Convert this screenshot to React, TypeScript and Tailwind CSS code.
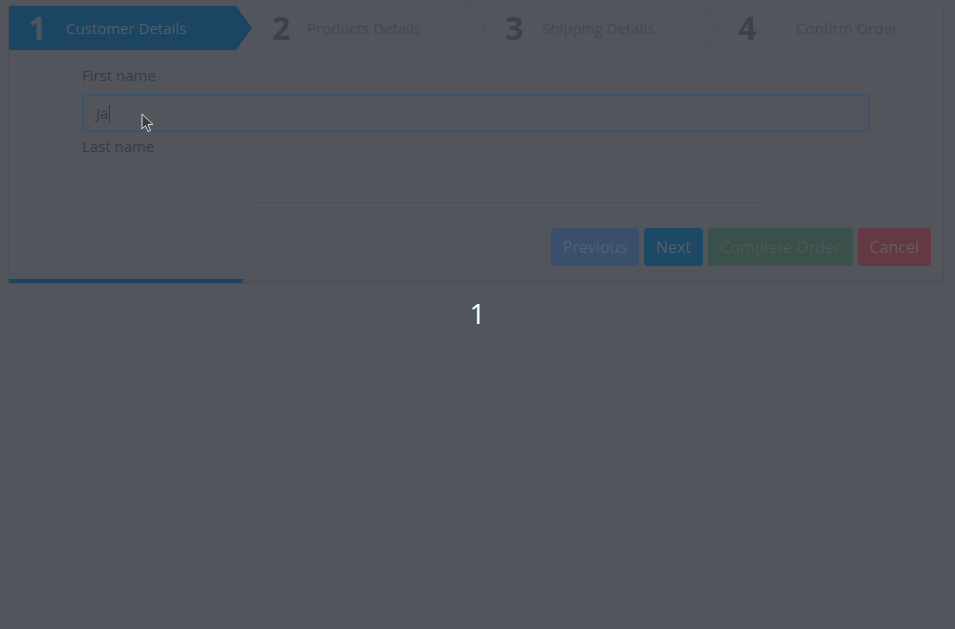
const steps = [
  { n: '1', label: 'Customer Details', numPad: 'pl-[19px]', textPad: 'pl-[19px]', width: 'w-[243px]' },
  { n: '2', label: 'Products Details', numPad: 'pl-[20px]', textPad: 'pl-[17px]', width: 'w-[235px]' },
  { n: '3', label: 'Shipping Details', numPad: 'pl-[18px]', textPad: 'pl-[17px]', width: 'w-[233px]' },
  { n: '4', label: 'Confirm Order', numPad: 'pl-[18px]', textPad: 'pl-[38px]', width: 'flex-1' },
]

const Chevron = () => (
  <svg className="absolute right-0 top-0 h-full w-[18px]" viewBox="0 0 18 44" fill="none">
    <path d="M1 0 L17 22 L1 44" stroke="#4d5057" strokeWidth="1" />
  </svg>
)

const Stepper = () => (
  <div className="flex h-[44px]">
    {steps.map((s, i) => {
      const active = i === 0
      return (
        <div key={s.n} className={`relative flex h-full items-center ${s.width}`}>
          {active && (
            <div className="absolute inset-0 bg-[#1c4563] [clip-path:polygon(0_0,227px_0,100%_50%,227px_100%,0_100%)]" />
          )}
          {!active && i < 3 && <Chevron />}
          <span
            className={`relative ${s.numPad} w-[57px] shrink-0 text-[32px] font-bold leading-none ${
              active ? 'text-[#4b555f]' : 'text-[#3e4148]'
            }`}
          >
            {s.n}
          </span>
          <span
            className={`relative ${s.textPad} -ml-[19px] text-[15px] ${
              active ? 'text-[#525e69]' : 'text-[#45484f]'
            }`}
          >
            {s.label}
          </span>
        </div>
      )
    })}
  </div>
)

const Cursor = () => (
  <svg className="absolute left-[141px] top-[113px] h-[20px] w-[13px]" viewBox="0 0 13 20">
    <path d="M1 1 L1 16 L4.5 12.5 L7 18.5 L9.5 17.5 L7 11.5 L12 11.5 Z" fill="#3a3d44" stroke="#d8d8d8" strokeWidth="1" />
  </svg>
)

export default function App() {
  return (
    <div className="relative min-h-screen bg-[#52555c] pt-[5px] font-['Open_Sans',sans-serif]">
      <div className="ml-[8px] w-[936px] border border-[#4d5057]">
        <Stepper />

        <div className="px-[73px] pt-[14px]">
          <label className="block h-[22px] text-[15px] leading-[22px] text-[#383b42]">First name</label>
          <div className="mt-[8px] flex h-[38px] items-center rounded-[4px] border-2 border-[#3d5470] px-[12px] text-[15px] text-[#383b42]">
            Ja<span className="ml-px inline-block h-[17px] w-px bg-[#383b42]" />
          </div>
          <label className="mt-[3px] block h-[22px] text-[15px] leading-[22px] text-[#383b42]">Last name</label>
          <div className="mt-[8px] h-[38px] rounded-[4px] border border-dotted border-[#484b52]" />
        </div>

        <div className="mt-[25px] flex justify-end gap-[5px] pr-[12px] text-[16px]">
          <button className="h-[38px] rounded-[4px] bg-[#3a4f6b] px-[12px] text-[#55606d]">Previous</button>
          <button className="h-[38px] rounded-[4px] bg-[#1d4866] px-[12px] text-[#52606c]">Next</button>
          <button className="h-[38px] rounded-[4px] bg-[#3a504b] px-[12px] text-[#4e5856]">Complete Order</button>
          <button className="h-[38px] rounded-[4px] bg-[#653943] px-[12px] text-[#695a61]">Cancel</button>
        </div>

        <div className="mt-[13px] h-[4px] bg-[#50535a]">
          <div className="h-full w-1/4 bg-[#1c4563]" />
        </div>
      </div>

      <div className="mt-[10px] text-center text-[28px] leading-[38px] text-white">1</div>

      <Cursor />
    </div>
  )
}
